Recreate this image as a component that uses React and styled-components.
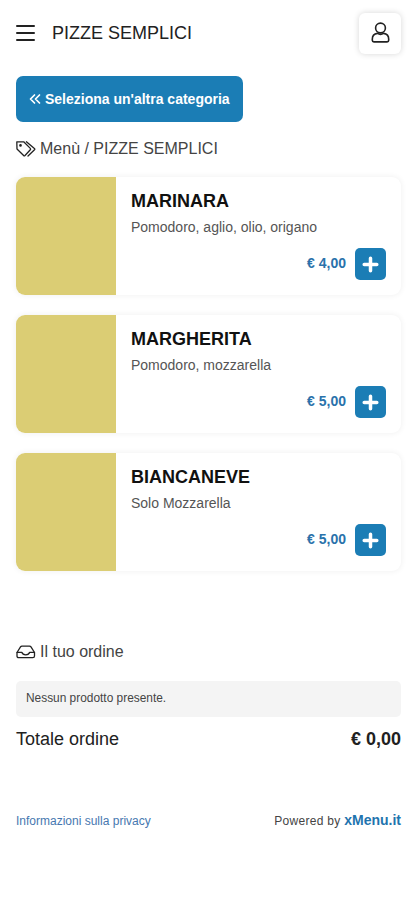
import React from 'react'
import styled, { createGlobalStyle } from 'styled-components'

const GlobalStyle = createGlobalStyle`
    * {
        box-sizing: border-box;
    }
    body {
        margin: 0;
        background: #fff;
        color: #212121;
        font-family: "Liberation Sans", Arial, sans-serif;
    }
`

const Page = styled.div`
    min-height: 900px;
    padding: 12px 14px 0 16px;
`

const Header = styled.header`
    display: flex;
    align-items: center;
    height: 42px;
`

const MenuButton = styled.button`
    display: flex;
    flex-direction: column;
    gap: 5px;
    width: 19px;
    padding: 0;
    border: 0;
    background: none;
`

const Bar = styled.span`
    height: 2px;
    width: 100%;
    border-radius: 1px;
    background: #222;
`

const Title = styled.h1`
    flex: 1;
    margin: 0 0 0 17px;
    font-size: 18px;
    font-weight: 400;
    line-height: 24px;
`

const UserButton = styled.button`
    display: flex;
    align-items: center;
    justify-content: center;
    width: 42px;
    height: 41px;
    padding: 0 0 2px;
    border: 0;
    border-radius: 6px;
    background: #fff;
    color: #222;
    box-shadow: 0 0 6px rgba(0, 0, 0, 0.16);
`

const BackButton = styled.button`
    display: flex;
    align-items: center;
    gap: 4px;
    width: 227px;
    height: 46px;
    margin-top: 22px;
    padding: 0 0 1px 13px;
    border: 0;
    border-radius: 7px;
    background: #1b7db5;
    color: #fff;
    font-family: inherit;
    font-size: 14px;
    font-weight: 700;
    white-space: nowrap;
`

const SectionTitle = styled.h2`
    display: flex;
    align-items: center;
    gap: 4px;
    height: 24px;
    margin: ${({ $top }) => $top}px 0 0;
    color: #444;
    font-size: 16px;
    font-weight: 400;

    svg {
        color: #222;
    }
`

const ProductList = styled.div`
    display: flex;
    flex-direction: column;
    gap: 20px;
    margin-top: 16px;
`

const Card = styled.article`
    display: flex;
    height: 118px;
    border-radius: 9px;
    overflow: hidden;
    background: #fff;
    box-shadow: 0 0 6px rgba(0, 0, 0, 0.07);
`

const Thumb = styled.div`
    width: 100px;
    background: #dbcd74;
`

const CardBody = styled.div`
    flex: 1;
    display: flex;
    flex-direction: column;
    padding: 13px 15px 15px;
`

const ProductName = styled.h3`
    margin: 0;
    color: #111;
    font-size: 18px;
    line-height: 22px;
`

const Description = styled.p`
    margin: 6px 0 0;
    color: #555;
    font-size: 14px;
    line-height: 18px;
`

const PriceRow = styled.div`
    display: flex;
    align-items: center;
    justify-content: flex-end;
    gap: 9px;
    margin-top: auto;
`

const Price = styled.span`
    padding-bottom: 3px;
    color: #2a72ab;
    font-size: 14px;
    font-weight: 700;
`

const AddButton = styled.button`
    display: flex;
    align-items: center;
    justify-content: center;
    width: 31px;
    height: 32px;
    padding: 0;
    border: 0;
    border-radius: 5px;
    background: #1b7db5;
    color: #fff;
`

const EmptyOrder = styled.div`
    height: 36px;
    margin-top: 17px;
    padding: 0 10px;
    border-radius: 5px;
    background: #f4f4f4;
    color: #444;
    font-size: 11.9px;
    line-height: 34px;
`

const Total = styled.div`
    display: flex;
    justify-content: space-between;
    margin-top: 10px;
    font-size: 18px;
    line-height: 24px;
`

const Footer = styled.footer`
    display: flex;
    justify-content: space-between;
    align-items: baseline;
    margin-top: 60px;
    font-size: 12px;
    line-height: 18px;
`

const PrivacyLink = styled.a`
    color: #4778b0;
`

const Powered = styled.span`
    color: #444;
    letter-spacing: 0.3px;

    b {
        color: #1f74ae;
        font-size: 14px;
        letter-spacing: 0;
    }
`

const Icon = ({ width, height, stroke = 1.3, children }) => (
    <svg
        width={width}
        height={height}
        viewBox={`0 0 ${width} ${height}`}
        fill="none"
        stroke="currentColor"
        strokeWidth={stroke}
        strokeLinecap="round"
        strokeLinejoin="round"
    >
        {children}
    </svg>
)

const UserIcon = () => (
    <Icon width={19} height={21} stroke={1.6}>
        <circle cx="9.5" cy="6" r="4.9" />
        <path d="M6.4 11.4C3 11.9 1.3 14.2 1.3 17.2V18.3Q1.3 19.9 2.9 19.9H16.1Q17.7 19.9 17.7 18.3V17.2C17.7 14.2 16 11.9 12.6 11.4C10.8 12.5 8.2 12.5 6.4 11.4Z" />
    </Icon>
)

const TagsIcon = () => (
    <Icon width={20} height={18}>
        <path d="M.8 1.8H7.7L14.3 8.4Q15 9.1 14.3 9.8L9 15.5Q8.3 16.2 7.6 15.5L1 9Z" />
        <path d="M10.4 1.8L18.4 8.4Q19.2 9.1 18.5 9.8L12 16" />
        <circle cx="4.5" cy="5.4" r=".7" fill="currentColor" />
    </Icon>
)

const InboxIcon = () => (
    <Icon width={20} height={14}>
        <path d="M1 7.5L4.5 1.9Q5 1.1 6 1.1H13.5Q14.5 1.1 15 1.9L18.5 7.5V11Q18.5 12.7 16.8 12.7H2.7Q1 12.7 1 11Z" />
        <path d="M1 7.3H5.8C6.4 9.2 7.7 9.9 9.75 9.9S13.1 9.2 13.7 7.3H18.5" />
    </Icon>
)

const DoubleLeftIcon = () => (
    <Icon width={12} height={12} stroke={1.7}>
        <path d="M5.5 2L1.5 6L5.5 10M10.5 2L6.5 6L10.5 10" />
    </Icon>
)

const PlusIcon = () => (
    <Icon width={17} height={17} stroke={3.5}>
        <path d="M8.5 2.2V14.8M2.2 8.5H14.8" />
    </Icon>
)

const products = [
    { id: 1, name: 'MARINARA', description: 'Pomodoro, aglio, olio, origano', price: '€ 4,00' },
    { id: 2, name: 'MARGHERITA', description: 'Pomodoro, mozzarella', price: '€ 5,00' },
    { id: 3, name: 'BIANCANEVE', description: 'Solo Mozzarella', price: '€ 5,00' },
]

const Product = ({ name, description, price }) => (
    <Card>
        <Thumb />
        <CardBody>
            <ProductName>{name}</ProductName>
            <Description>{description}</Description>
            <PriceRow>
                <Price>{price}</Price>
                <AddButton aria-label="Aggiungi"><PlusIcon /></AddButton>
            </PriceRow>
        </CardBody>
    </Card>
)

const App = () => {
    return (
        <>
            <GlobalStyle />
            <Page>
                <Header>
                    <MenuButton aria-label="Menu">
                        <Bar />
                        <Bar />
                        <Bar />
                    </MenuButton>
                    <Title>PIZZE SEMPLICI</Title>
                    <UserButton aria-label="Account"><UserIcon /></UserButton>
                </Header>

                <BackButton><DoubleLeftIcon /> Seleziona un'altra categoria</BackButton>

                <SectionTitle $top={15}><TagsIcon /> Menù / PIZZE SEMPLICI</SectionTitle>

                <ProductList>
                    {products.map(el => <Product key={el.id} {...el} />)}
                </ProductList>

                <SectionTitle $top={69}><InboxIcon /> Il tuo ordine</SectionTitle>
                <EmptyOrder>Nessun prodotto presente.</EmptyOrder>
                <Total>
                    <span>Totale ordine</span>
                    <b>€ 0,00</b>
                </Total>

                <Footer>
                    <PrivacyLink>Informazioni sulla privacy</PrivacyLink>
                    <Powered>Powered by <b>xMenu.it</b></Powered>
                </Footer>
            </Page>
        </>
    )
}

export default App
